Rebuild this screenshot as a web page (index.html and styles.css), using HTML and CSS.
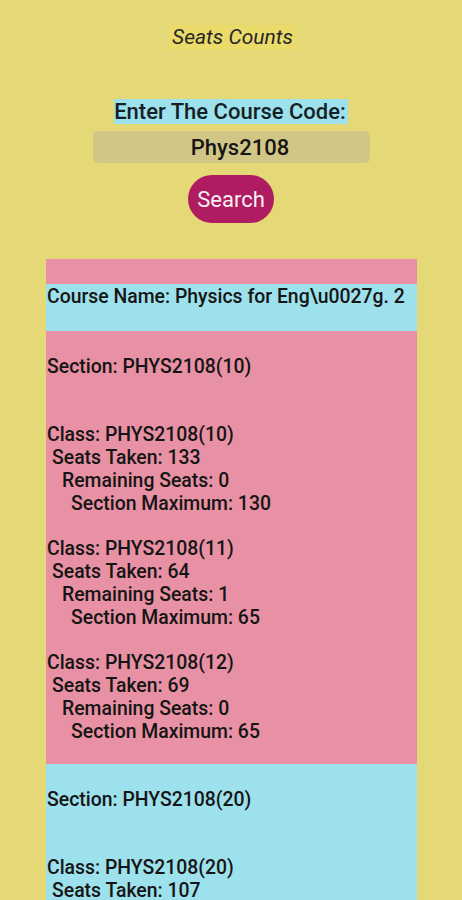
FILE: index.html
```html
<!DOCTYPE html>
<html>
<head>
<meta charset="utf-8">
<link rel="stylesheet" href="styles.css">
</head>
<body>
<div class="app">
  <div class="title-row"><span class="title">Seats Counts</span></div>
  <div class="label-row"><span class="label">Enter The Course Code:</span></div>
  <div class="input">Phys2108</div>
  <button class="search">Search</button>
  <div class="results">
    <div class="course">Course Name: Physics for Eng\u0027g. 2</div>
    <div class="section pink">
      <div class="sec-name">Section: PHYS2108(10)</div>
      <div class="cls">
        <div class="l0">Class: PHYS2108(10)</div>
        <div class="l1">Seats Taken: 133</div>
        <div class="l2">Remaining Seats: 0</div>
        <div class="l3">Section Maximum: 130</div>
      </div>
      <div class="cls">
        <div class="l0">Class: PHYS2108(11)</div>
        <div class="l1">Seats Taken: 64</div>
        <div class="l2">Remaining Seats: 1</div>
        <div class="l3">Section Maximum: 65</div>
      </div>
      <div class="cls">
        <div class="l0">Class: PHYS2108(12)</div>
        <div class="l1">Seats Taken: 69</div>
        <div class="l2">Remaining Seats: 0</div>
        <div class="l3">Section Maximum: 65</div>
      </div>
    </div>
    <div class="section cyan">
      <div class="sec-name">Section: PHYS2108(20)</div>
      <div class="cls">
        <div class="l0">Class: PHYS2108(20)</div>
        <div class="l1">Seats Taken: 107</div>
        <div class="l2">Remaining Seats: 0</div>
        <div class="l3">Section Maximum: 105</div>
      </div>
    </div>
  </div>
</div>
</body>
</html>
```
FILE: styles.css
```css
html, body {
  margin: 0;
  padding: 0;
  background: #e5d877;
  height: 900px;
  overflow: hidden;
}
.app {
  font-family: Roboto, "Noto Sans", sans-serif;
  color: #1a1a1a;
  display: flex;
  flex-direction: column;
  align-items: center;
}
.title-row {
  margin-top: 25px;
  height: 25px;
}
.title {
  display: inline-block;
  background: #eadb6b;
  font-style: italic;
  font-size: 21px;
  line-height: 25px;
  padding: 0 3px;
  margin-left: 3px;
  color: #262626;
}
.label-row {
  margin-top: 49px;
  height: 25px;
}
.label {
  display: inline-block;
  background: #9de1ec;
  font-size: 22px;
  font-weight: 500;
  line-height: 25px;
  padding-right: 2px;
  color: #141f26;
}
.input {
  margin-top: 7px;
  width: 277px;
  height: 32px;
  box-sizing: border-box;
  background: #d2c686;
  border-radius: 5px;
  font-size: 22px;
  font-weight: 500;
  line-height: 33px;
  text-align: center;
  padding-left: 18px;
  color: #161616;
}
.search {
  margin-top: 12px;
  width: 86px;
  height: 48px;
  border: none;
  border-radius: 24px;
  background: #b01c62;
  color: #f5f0f3;
  font-family: Roboto, "Noto Sans", sans-serif;
  font-size: 22px;
  font-weight: 400;
  padding: 0;
}
.results {
  margin-top: 36px;
  width: 371px;
  align-self: flex-start;
  margin-left: 46px;
  background: #e991a4;
  padding-top: 25px;
  font-size: 19.4px;
  font-weight: 500;
  line-height: 22.8px;
  white-space: nowrap;
  color: #151515;
}
.course {
  background: #9de1ec;
  padding-left: 1px;
  padding-top: 2px;
  height: 47px;
  box-sizing: border-box;
}
.section {
  padding-top: 24.8px;
}
.pink { background: #e991a4; }
.cyan { background: #9de1ec; }
.sec-name {
  padding-left: 1px;
  margin-bottom: 45.6px;
}
.cls {
  margin-bottom: 22.8px;
}
.cls:last-child {
  margin-bottom: 20.8px;
}
.l0 { padding-left: 1px; }
.l1 { padding-left: 6px; }
.l2 { padding-left: 16px; }
.l3 { padding-left: 25px; }
```
